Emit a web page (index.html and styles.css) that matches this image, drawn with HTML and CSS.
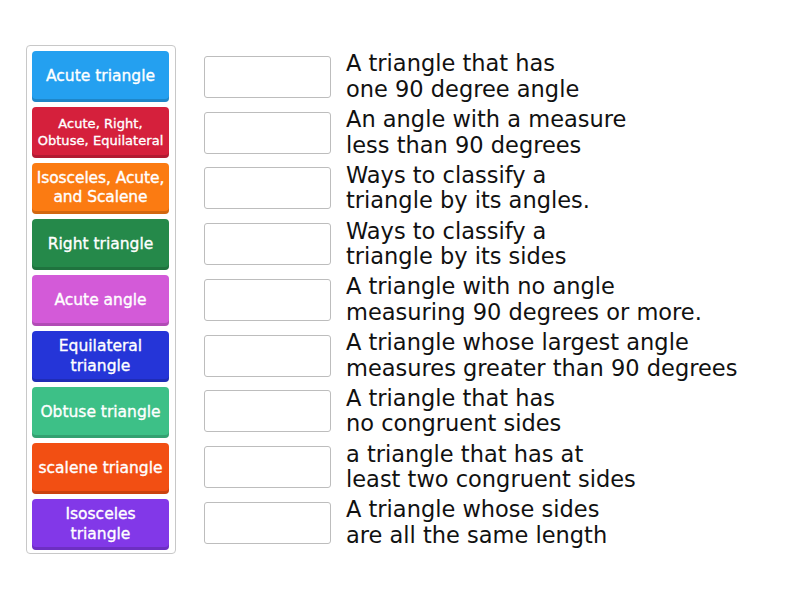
FILE: index.html
```html
<!DOCTYPE html>
<html>
<head>
<meta charset="utf-8">
<link rel="stylesheet" href="styles.css">
</head>
<body>
<div class="page">
  <div class="panel">
    <div class="tile c1">Acute triangle</div>
    <div class="tile c2 small">Acute, Right,<br>Obtuse, Equilateral</div>
    <div class="tile c3 mid">Isosceles, Acute,<br>and Scalene</div>
    <div class="tile c4">Right triangle</div>
    <div class="tile c5">Acute angle</div>
    <div class="tile c6">Equilateral<br>triangle</div>
    <div class="tile c7">Obtuse triangle</div>
    <div class="tile c8">scalene triangle</div>
    <div class="tile c9">Isosceles<br>triangle</div>
  </div>
  <div class="targets">
    <div class="row"><div class="box"></div><div class="def">A triangle that has<br>one 90 degree angle</div></div>
    <div class="row"><div class="box"></div><div class="def">An angle with a measure<br>less than 90 degrees</div></div>
    <div class="row"><div class="box"></div><div class="def">Ways to classify a<br>triangle by its angles.</div></div>
    <div class="row"><div class="box"></div><div class="def">Ways to classify a<br>triangle by its sides</div></div>
    <div class="row"><div class="box"></div><div class="def">A triangle with no angle<br>measuring 90 degrees or more.</div></div>
    <div class="row"><div class="box"></div><div class="def">A triangle whose largest angle<br>measures greater than 90 degrees</div></div>
    <div class="row"><div class="box"></div><div class="def">A triangle that has<br>no congruent sides</div></div>
    <div class="row"><div class="box"></div><div class="def">a triangle that has at<br>least two congruent sides</div></div>
    <div class="row"><div class="box"></div><div class="def">A triangle whose sides<br>are all the same length</div></div>
  </div>
</div>
</body>
</html>
```

FILE: styles.css
```css
html, body {
  margin: 0;
  padding: 0;
  background: #fff;
}
body {
  font-family: "DejaVu Sans", "Open Sans", sans-serif;
  color: #111;
}
.page {
  display: flex;
  align-items: flex-start;
  padding: 45px 0 0 26px;
}
.panel {
  width: 137px;
  padding: 5px 6px 3px 5px;
  border: 1px solid #c8c8c8;
  border-radius: 4px;
  display: flex;
  flex-direction: column;
  gap: 5px;
}
.tile {
  height: 51px;
  box-sizing: border-box;
  border-radius: 4px;
  display: flex;
  align-items: center;
  justify-content: center;
  text-align: center;
  color: #fff;
  font-size: 15.5px;
  line-height: 20px;
  -webkit-text-stroke: 0.35px #fff;
  box-shadow: inset 0 -3px 0 rgba(0,0,0,0.16);
  letter-spacing: 0;
  padding-bottom: 2px;
  white-space: nowrap;
}
.tile.small { font-size: 13px; line-height: 17px; letter-spacing: 0.05px; }
.tile.mid { font-size: 15.5px; line-height: 19px; letter-spacing: -0.1px; }
.c1 { background: #24a0f0; }
.c2 { background: #d5203c; }
.c3 { background: #fb7b12; }
.c4 { background: #25894a; }
.c5 { background: #d35ad8; }
.c6 { background: #2535d8; }
.c7 { background: #3dc087; }
.c8 { background: #f24f13; }
.c9 { background: #8238e8; }
.targets {
  margin-left: 28px;
  padding-top: 4px;
  display: flex;
  flex-direction: column;
}
.row {
  height: 55.75px;
  display: flex;
  align-items: center;
}
.box {
  width: 125px;
  height: 40px;
  border: 1px solid #bdbdbd;
  border-radius: 3px;
  flex: none;
}
.def {
  margin-left: 15px;
  margin-top: 0;
  font-size: 22.5px;
  line-height: 25.5px;
  white-space: nowrap;
  color: #111;
}
```
